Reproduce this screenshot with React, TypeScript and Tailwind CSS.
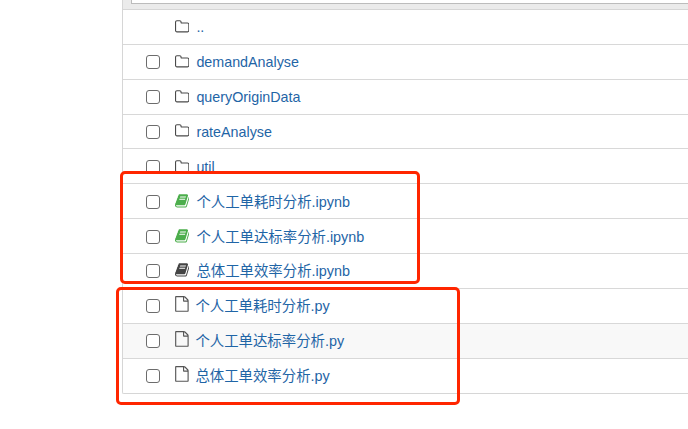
type Kind = "folder" | "running" | "notebook" | "file";

const icons = {
  folder: {
    box: "0 0 1664 1792",
    d: "M1536 1312v-704q0-40-28-68t-68-28h-704q-40 0-68-28t-28-68v-64q0-40-28-68t-68-28h-320q-40 0-68 28t-28 68v960q0 40 28 68t68 28h1216q40 0 68-28t28-68zm128-704v704q0 92-66 158t-158 66h-1216q-92 0-158-66t-66-158v-960q0-92 66-158t158-66h320q92 0 158 66t66 158v32h672q92 0 158 66t66 158z",
  },
  book: {
    box: "0 0 1664 1792",
    d: "M1639 478q40 57 18 129l-275 906q-19 64-76.500 107.500t-122.500 43.500h-923q-77 0-148.500-53.500t-99.500-131.500q-24-67-2-127 0-4 3-27t4-37q1-8-3-21.500t-3-19.500q2-11 8-21t16.500-23.500 16.500-23.500q23-38 45-91.500t30-91.500q3-10 .5-30t-.5-28q3-11 17-28t17-23q21-36 42-92t25-90q1-9-2.500-32t.5-28q4-13 22-30.500t22-22.500q19-26 42.500-84.500t27.500-96.500q1-8-3-25.500t-2-26.500q2-8 9-18t18-23 17-21q8-12 16.500-30.500t15-35 16-36 19.500-32 26.500-23.500 36-11.500 47.500 5.500l-1 3q38-9 51-9h761q74 0 114 56t18 130l-274 906q-36 119-71.500 153.500t-128.500 34.500h-869q-27 0-38 15-11 16-1 43 24 70 144 70h923q29 0 56-15.500t35-41.500l300-987q7-22 5-57 38 15 59 43zm-1064 2q-4 13 2 22.500t20 9.500h608q13 0 25.500-9.500t16.500-22.500l21-64q4-13-2-22.500t-20-9.500h-608q-13 0-25.500 9.500t-16.500 22.500zm-83 256q-4 13 2 22.500t20 9.500h608q13 0 25.500-9.500t16.500-22.500l21-64q4-13-2-22.500t-20-9.500h-608q-13 0-25.500 9.500t-16.500 22.500z",
  },
  file: {
    box: "0 0 1536 1792",
    d: "M1468 380q28 28 48 76t20 88v1152q0 40-28 68t-68 28h-1344q-40 0-68-28t-28-68v-1600q0-40 28-68t68-28h896q40 0 88 20t76 48zm-444-244v376h376q-10-29-22-41l-313-313q-12-12-41-22zm384 1528v-1024h-416q-40 0-68-28t-28-68v-416h-768v1536h1280z",
  },
};

const rows: { name: string; kind: Kind; height: string; up?: boolean; hover?: boolean }[] = [
  { name: "..", kind: "folder", height: "h-[35px]", up: true },
  { name: "demandAnalyse", kind: "folder", height: "h-[35px]" },
  { name: "queryOriginData", kind: "folder", height: "h-[35px]" },
  { name: "rateAnalyse", kind: "folder", height: "h-[34px]" },
  { name: "util", kind: "folder", height: "h-[35px] pt-[2px]" },
  { name: "个人工单耗时分析.ipynb", kind: "running", height: "h-[35px] pt-[2px]" },
  { name: "个人工单达标率分析.ipynb", kind: "running", height: "h-[35px] pt-[2px]" },
  { name: "总体工单效率分析.ipynb", kind: "notebook", height: "h-[35px]" },
  { name: "个人工单耗时分析.py", kind: "file", height: "h-[35px]" },
  { name: "个人工单达标率分析.py", kind: "file", height: "h-[35px]", hover: true },
  { name: "总体工单效率分析.py", kind: "file", height: "h-[34px]" },
];

function ItemIcon({ kind }: { kind: Kind }) {
  const icon = kind === "folder" ? icons.folder : kind === "file" ? icons.file : icons.book;
  const look =
    kind === "running"
      ? "w-[14.4px] mr-[7px] mb-[3px] text-[#4cae4c]"
      : kind === "file"
        ? "w-[13.8px] mr-[6.6px] mb-[4px] text-[#555]"
        : kind === "folder"
          ? "w-[14.4px] mr-[7px] mb-px text-[#4a4a4a]"
          : "w-[14.4px] mr-[7px] mb-[2px] text-[#444]";
  return (
    <svg viewBox={icon.box} className={`h-[15.8px] shrink-0 ml-[15px] ${look}`} fill="currentColor">
      <path d={icon.d} />
    </svg>
  );
}

export default function App() {
  return (
    <div className="relative h-[429px] w-[688px] overflow-hidden bg-white pl-[122px] font-['Liberation_Sans','Noto_Sans_CJK_SC',sans-serif]">
      <div className="rounded-bl-[2px] border-b border-l border-[#d6d6d6]">
        <div className="h-[10px] border-b border-[#d6d6d6] bg-[#ebebeb] pl-[8px]">
          <div className="h-[4px] border-b border-l border-[#bcbcbc] bg-white" />
        </div>
        <div className="divide-y divide-[#d8d8d8]">
          {rows.map((r) => (
            <div
              key={r.name}
              className={`flex items-center pl-[23px] ${r.height} ${r.hover ? "bg-[#f8f8f8]" : ""}`}
            >
              <span
                className={`size-[14px] shrink-0 rounded-[3px] ${r.up ? "" : "border border-[#6c6c6c] bg-white"}`}
              />
              <ItemIcon kind={r.kind} />
              <a className={`whitespace-nowrap leading-5 text-[#1f65a6] ${r.kind === "folder" ? "text-[14.3px]" : "text-[14.4px]"}`}>{r.name}</a>
            </div>
          ))}
        </div>
      </div>
      <div className="absolute left-[120px] top-[171px] h-[113px] w-[300px] rounded-[5px] border-3 border-[#ff2600]" />
      <div className="absolute left-[116px] top-[287px] h-[118px] w-[344px] rounded-[5px] border-3 border-[#ff2600]" />
    </div>
  );
}
